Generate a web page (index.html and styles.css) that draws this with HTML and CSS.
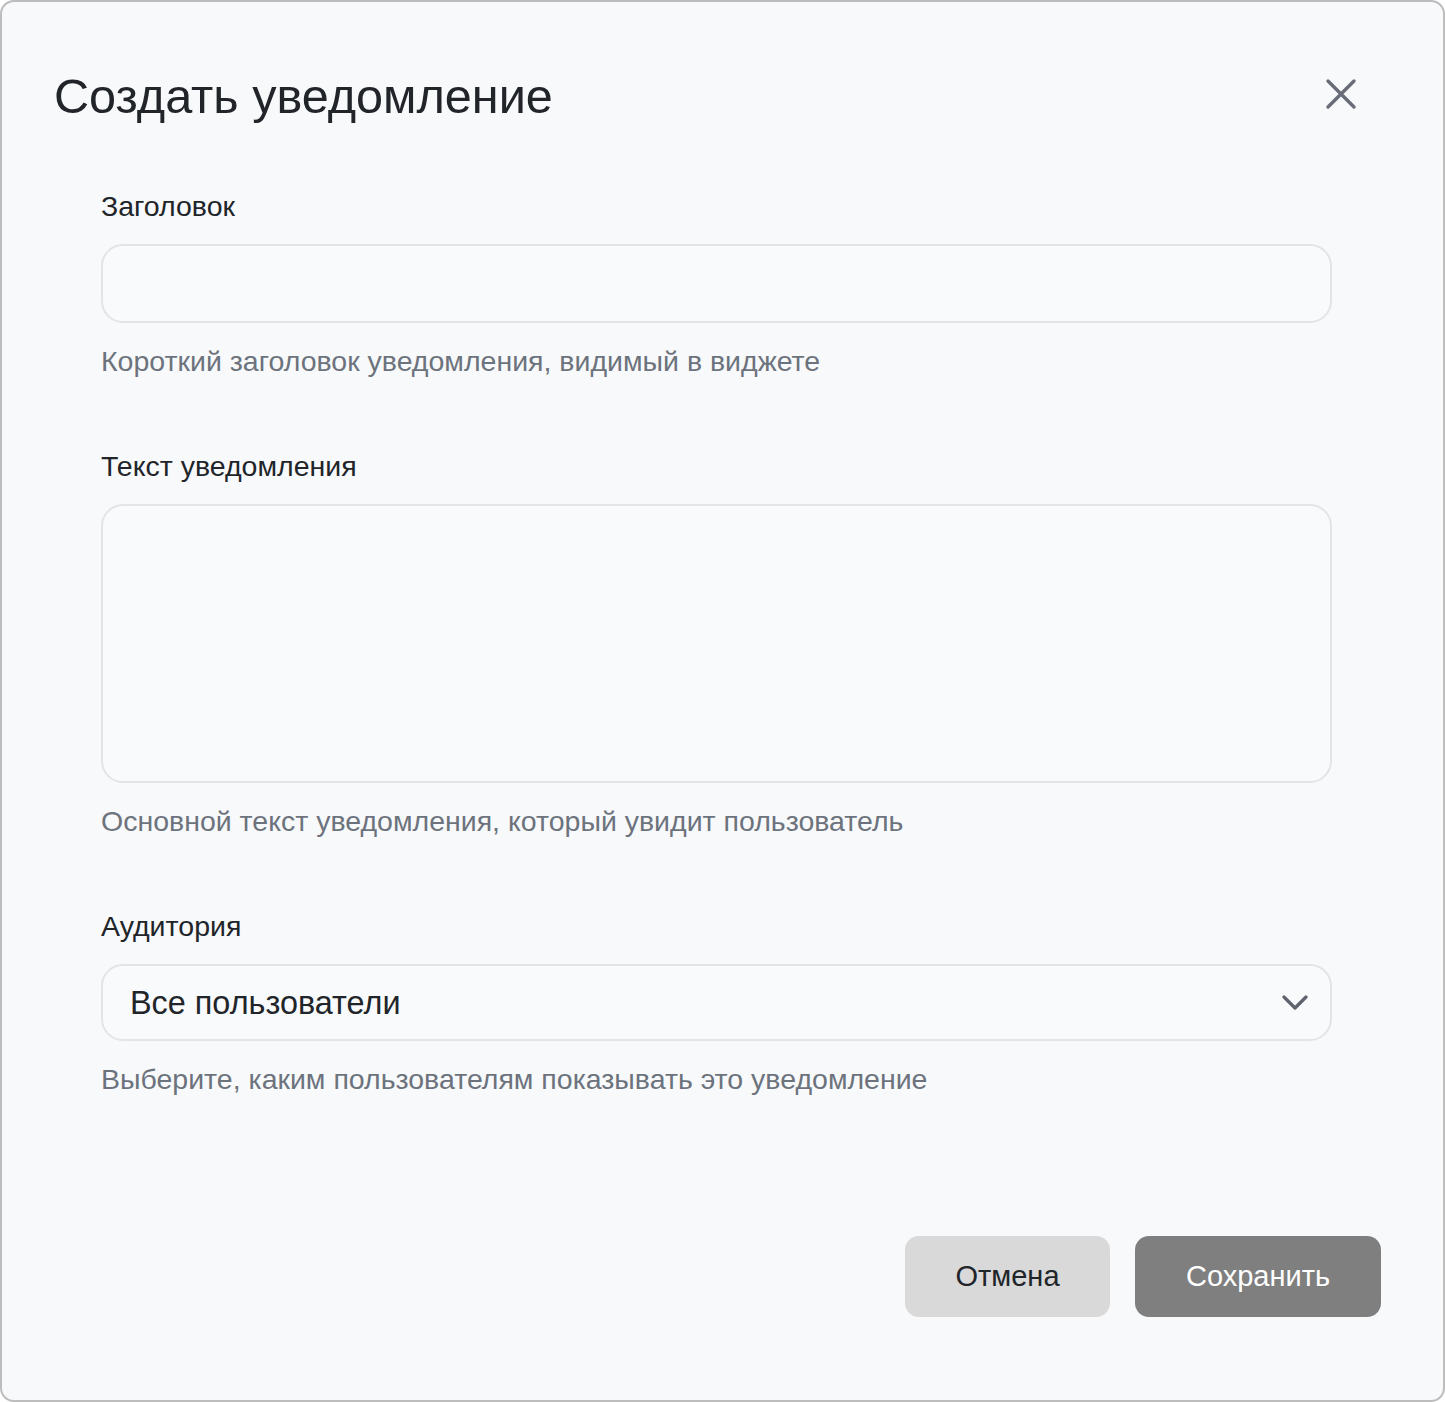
FILE: index.html
```html
<!DOCTYPE html>
<html lang="ru">
<head>
    <meta charset="UTF-8">
    <meta name="viewport" content="width=device-width, initial-scale=1.0">
    <title>Создать уведомление</title>
    <link rel="stylesheet" href="styles.css">
</head>
  <body>
    <main class="dialog">

      <header class="dialog-header">
        <h1 class="dialog-title">Создать уведомление</h1>
        <button class="close" type="button" aria-label="Закрыть">
          <svg width="32" height="32" viewBox="0 0 32 32" fill="none" stroke="currentColor" stroke-width="3.4" stroke-linecap="round">
            <path d="M3 3 L29 29 M29 3 L3 29"/>
          </svg>
        </button>
      </header>

      <form class="dialog-body">

        <div class="field">
          <label class="label" for="title">Заголовок</label>
          <input class="control input" id="title" type="text">
          <p class="hint">Короткий заголовок уведомления, видимый в виджете</p>
        </div>

        <div class="field">
          <label class="label" for="text">Текст уведомления</label>
          <textarea class="control textarea" id="text"></textarea>
          <p class="hint">Основной текст уведомления, который увидит пользователь</p>
        </div>

        <div class="field">
          <label class="label" for="audience">Аудитория</label>
          <div class="select-wrap">
            <select class="control select" id="audience">
              <option>Все пользователи</option>
            </select>
            <svg class="chevron" width="26" height="16" viewBox="0 0 26 16" fill="none" stroke="currentColor" stroke-width="3.2" stroke-linecap="round" stroke-linejoin="round">
              <path d="M2 2 L13 13 L24 2"/>
            </svg>
          </div>
          <p class="hint">Выберите, каким пользователям показывать это уведомление</p>
        </div>

      </form>

      <footer class="dialog-footer">
        <button class="btn btn-cancel" type="button">Отмена</button>
        <button class="btn btn-save" type="button">Сохранить</button>
      </footer>

    </main>
  </body>
</html>
```

FILE: styles.css
```css
* {
  margin: 0;
  padding: 0;
  box-sizing: border-box;
}

html, body {
  height: 100%;
}

body {
  font-family: "Liberation Sans", Arial, "Helvetica", sans-serif;
  color: #212529;
  background-color: #ffffff;
}

.dialog {
  height: 1402px;
  display: flex;
  flex-direction: column;
  background-color: #f8f9fb;
  border: 2px solid #bdbdbd;
  border-radius: 14px;
}

.dialog-header {
  display: flex;
  align-items: center;
  justify-content: space-between;
  padding: 66px 86px 0 52px;
}

.dialog-title {
  font-size: 48.6px;
  line-height: 56px;
  font-weight: 400;
  color: #212529;
}

.close {
  display: flex;
  margin-bottom: 4px;
  border: 0;
  background: none;
  color: #696d78;
  cursor: pointer;
}

.dialog-body {
  display: flex;
  flex-direction: column;
  gap: 73px;
  padding: 66px 111px 0 99px;
}

.field {
  display: flex;
  flex-direction: column;
  gap: 22px;
}

.label {
  font-size: 28.5px;
  line-height: 32px;
  color: #212529;
}

.hint {
  font-size: 28.5px;
  line-height: 32px;
  color: #6c737d;
}

.control {
  width: 100%;
  font-family: inherit;
  background-color: #f9fafb;
  border: 2px solid #e3e4e6;
  border-radius: 22px;
  outline: none;
}

.input {
  height: 79px;
  padding: 0 28px;
  font-size: 28.8px;
}

.textarea {
  height: 279px;
  padding: 20px 28px;
  font-size: 28.8px;
  resize: none;
}

.select-wrap {
  position: relative;
}

.select {
  height: 77px;
  padding: 0 70px 0 27px;
  font-size: 32.4px;
  color: #212529;
  -webkit-appearance: none;
  appearance: none;
}

.chevron {
  position: absolute;
  right: 24px;
  top: 31px;
  color: #5f636e;
  pointer-events: none;
}

.dialog-footer {
  margin-top: auto;
  display: flex;
  justify-content: flex-end;
  gap: 25px;
  padding: 0 62px 83px 0;
}

.btn {
  height: 81px;
  border: 0;
  border-radius: 14px;
  font-family: inherit;
  font-size: 29px;
  cursor: pointer;
}

.btn-cancel {
  width: 205px;
  background-color: #d9d9d9;
  color: #212529;
}

.btn-save {
  width: 246px;
  background-color: #7f7f7f;
  color: #ffffff;
}
```
